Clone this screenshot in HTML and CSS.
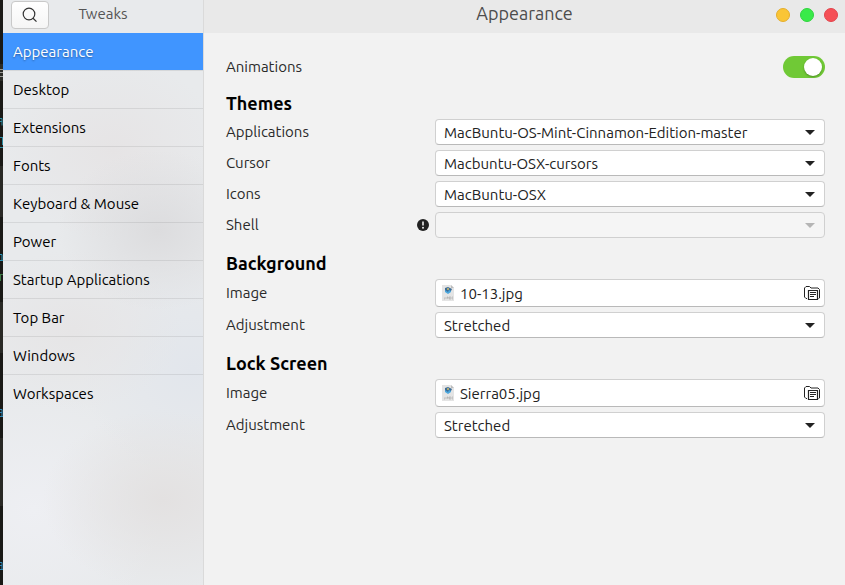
FILE: index.html
```html
<!DOCTYPE html>
<html lang="en">
<head>
  <meta charset="UTF-8" />
  <meta name="viewport" content="width=device-width, initial-scale=1.0"/>
  <title>Tweaks</title>
  <link rel="stylesheet" href="styles.css">
</head>
<body>
  <!-- edge of the editor window behind -->
  <div class="backdrop" aria-hidden="true">
    <svg width="3" height="585">
      <rect width="3" height="585" fill="#191916"/>
      <rect y="64" width="3" height="17" fill="#2c2c28"/>
      <rect y="166" width="3" height="51" fill="#292925"/>
      <rect y="302" width="3" height="51" fill="#292925"/>
      <rect y="438" width="3" height="68" fill="#292925"/>
      <path d="M0 69.500h3M0 72.500h3M0 76.500h3" stroke="#9a9a96"/>
      <path d="M0 118.500h2v7M0 121.500h2M2.500 137v8M0 137.500h2M0 147.500h3" stroke="#2b8aa0" fill="none"/>
      <path d="M0 254.500h2v6M0 260.500h3" stroke="#2b93b5" fill="none"/>
      <path d="M.5 274v7M1 274.500h2" stroke="#3d7a45" fill="none"/>
      <path d="M0 409.500h2v7M0 412.500h2M0 416.500h3M0 562.500h2v7M0 565.500h2M0 569.500h3" stroke="#2f86b5" fill="none"/>
    </svg>
  </div>

  <aside class="sidebar">
    <header class="sidebar-header">
      <button class="search-btn" type="button" aria-label="Search">
        <svg width="16" height="16" viewBox="0 0 16 16" fill="none" stroke="#333" stroke-width="1.200">
          <circle cx="7" cy="7" r="5.800"/>
          <path d="M11 11.300L14.500 14.600"/>
        </svg>
      </button>
      <h1>Tweaks</h1>
    </header>
    <nav class="menu">
      <a href="#appearance" class="active">Appearance</a>
      <a href="#desktop">Desktop</a>
      <a href="#extensions">Extensions</a>
      <a href="#fonts">Fonts</a>
      <a href="#keyboard">Keyboard &amp; Mouse</a>
      <a href="#power">Power</a>
      <a href="#startup">Startup Applications</a>
      <a href="#topbar">Top Bar</a>
      <a href="#windows">Windows</a>
      <a href="#workspaces">Workspaces</a>
    </nav>
  </aside>

  <main class="content">
    <header class="titlebar">
      <h2>Appearance</h2>
      <div class="window-controls">
        <button type="button" class="minimize" aria-label="Minimize"></button>
        <button type="button" class="maximize" aria-label="Maximize"></button>
        <button type="button" class="close" aria-label="Close"></button>
      </div>
    </header>

    <form class="settings" id="appearance">
      <div class="switch-row">
        <label for="animations">Animations</label>
        <input type="checkbox" id="animations" class="switch" checked />
      </div>

      <section>
        <h3>Themes</h3>
        <div class="rows">
          <div class="row">
            <label for="applications">Applications</label>
            <select id="applications"><option>MacBuntu-OS-Mint-Cinnamon-Edition-master</option></select>
          </div>
          <div class="row">
            <label for="cursor">Cursor</label>
            <select id="cursor"><option>Macbuntu-OSX-cursors</option></select>
          </div>
          <div class="row">
            <label for="icons">Icons</label>
            <select id="icons"><option>MacBuntu-OSX</option></select>
          </div>
          <div class="row">
            <label for="shell">Shell
              <svg width="12" height="12" viewBox="0 0 12 12">
                <circle cx="6" cy="6" r="6" fill="#222"/>
                <path d="M6 2.500v4" stroke="#eee" stroke-width="1.600"/>
                <circle cx="6" cy="8.800" r="1" fill="#eee"/>
              </svg>
            </label>
            <select id="shell" disabled><option></option></select>
          </div>
        </div>
      </section>

      <section>
        <h3>Background</h3>
        <div class="rows">
          <div class="row">
            <label for="bgImage">Image</label>
            <button type="button" class="file-btn" id="bgImage">
              <svg class="thumb" width="12" height="16" viewBox="0 0 12 16">
                <path d="M0 0h9l3 3v13H0z" fill="#e4e4e4"/>
                <path d="M9 0v3h3z" fill="#bbb"/>
                <path d="M3 5h6v2L6 9 3 7z" fill="#4aa6dd"/>
                <path d="M3 3l3-1 4 2-1 2-2-1-1 2-3-2z" fill="#3d6c96"/>
                <circle cx="6" cy="4" r="1" fill="#d7bd65"/>
                <path d="M3 12v2H2M5 14v-2h1v1H5M9 12H7v2h2M7 13h2M11 12h-1v2h1" fill="none" stroke="#aaa" stroke-width="0.600"/>
              </svg>
              <span>10-13.jpg</span>
              <svg class="folder" width="16" height="16" viewBox="0 0 16 16" fill="none" stroke="#222">
                <path d="M3 13.500H2L.5 12V3L2 1.500h3.500L7 3h7l1.500 1.500V13l-1 .5"/>
                <path d="M4.500 5.500h9v9h-9z" stroke-width="1.200"/>
                <path d="M6 7.500h6M6 9.500h6M6 11.500h4"/>
              </svg>
            </button>
          </div>
          <div class="row">
            <label for="bgAdjustment">Adjustment</label>
            <select id="bgAdjustment"><option>Stretched</option></select>
          </div>
        </div>
      </section>

      <section>
        <h3>Lock Screen</h3>
        <div class="rows">
          <div class="row">
            <label for="lockImage">Image</label>
            <button type="button" class="file-btn" id="lockImage">
              <svg class="thumb" width="12" height="16" viewBox="0 0 12 16">
                <path d="M0 0h9l3 3v13H0z" fill="#e4e4e4"/>
                <path d="M9 0v3h3z" fill="#bbb"/>
                <path d="M3 5h6v2L6 9 3 7z" fill="#4aa6dd"/>
                <path d="M3 3l3-1 4 2-1 2-2-1-1 2-3-2z" fill="#3d6c96"/>
                <circle cx="6" cy="4" r="1" fill="#d7bd65"/>
                <path d="M3 12v2H2M5 14v-2h1v1H5M9 12H7v2h2M7 13h2M11 12h-1v2h1" fill="none" stroke="#aaa" stroke-width="0.600"/>
              </svg>
              <span>Sierra05.jpg</span>
              <svg class="folder" width="16" height="16" viewBox="0 0 16 16" fill="none" stroke="#222">
                <path d="M3 13.500H2L.5 12V3L2 1.500h3.500L7 3h7l1.500 1.500V13l-1 .5"/>
                <path d="M4.500 5.500h9v9h-9z" stroke-width="1.200"/>
                <path d="M6 7.500h6M6 9.500h6M6 11.500h4"/>
              </svg>
            </button>
          </div>
          <div class="row">
            <label for="lockAdjustment">Adjustment</label>
            <select id="lockAdjustment"><option>Stretched</option></select>
          </div>
        </div>
      </section>
    </form>
  </main>
</body>
</html>
```
FILE: styles.css
```css
* {
  margin: 0;
  padding: 0;
  box-sizing: border-box;
  font-family: Ubuntu, "Noto Sans", sans-serif;
}
body {
  display: grid;
  grid-template-columns: 3px 201px 1fr;
  min-height: 100vh;
  background: #f2f2f2;
  color: #2a2a2a;
  font-size: 15px;
}
.backdrop {
  background: #191916;
  overflow: hidden;
}
.backdrop svg {
  display: block;
}

/* sidebar */
.sidebar {
  border-right: 1px solid #dadada;
  background:
    radial-gradient(ellipse 100px 80px at 155px 230px, #dcdcde, transparent),
    radial-gradient(ellipse 120px 90px at 160px 500px, #e3e1e1, transparent),
    radial-gradient(ellipse 110px 80px at 70px 330px, #e6e5e6, transparent),
    radial-gradient(ellipse 110px 110px at 190px 370px, #e2e6ec, transparent),
    radial-gradient(ellipse 110px 90px at 110px 150px, #e6e4e5, transparent),
    radial-gradient(ellipse 130px 120px at 30px 510px, #eeeff3, transparent),
    #e8eaec;
}
.sidebar-header {
  display: grid;
  grid-template-columns: 38px 1fr 38px;
  height: 33px;
  padding: 1px 8px 4px;
}
.sidebar-header h1 {
  color: #555;
  font-size: 15px;
  font-weight: normal;
  line-height: 26px;
  text-align: center;
}
.search-btn {
  display: flex;
  align-items: center;
  justify-content: center;
  border: 1px solid #c9c9c9;
  border-radius: 4px;
  background: linear-gradient(#fff, #f5f5f5);
}
.menu a {
  display: block;
  height: 38px;
  padding: 0 10px;
  border-bottom: 1px solid rgba(0, 0, 0, 0.08);
  color: #000;
  line-height: 38px;
  text-decoration: none;
}
.menu a:last-child {
  border-bottom: none;
}
.menu a.active {
  background: #4095ff;
  background-clip: padding-box;
  color: white;
  text-shadow: 0 1px 2px rgba(0, 0, 0, 0.4);
}

/* title bar */
.titlebar {
  display: grid;
  grid-template-columns: 1fr auto 1fr;
  height: 33px;
  padding: 0 7px 4px;
  background: #e9e9e9;
}
.titlebar h2 {
  grid-column: 2;
  color: #4c4c4c;
  font-size: 18px;
  font-weight: normal;
  line-height: 27px;
}
.window-controls {
  display: flex;
  align-items: center;
  justify-content: flex-end;
  gap: 10px;
}
.window-controls button {
  width: 14px;
  height: 14px;
  border: 1px solid #e5ae2c;
  border-radius: 50%;
  background: #fac536;
}
.window-controls .maximize {
  border-color: #30d43f;
  background: #39ea49;
}
.window-controls .close {
  border-color: #e3444c;
  background: #f55056;
}

/* settings */
.settings {
  display: flex;
  flex-direction: column;
  gap: 14px;
  padding: 23px 20px 20px 22px;
}
.switch-row {
  display: flex;
  align-items: center;
  justify-content: space-between;
}
.switch {
  appearance: none;
  display: flex;
  align-items: center;
  width: 42px;
  height: 22px;
  padding: 2px 3px;
  border-radius: 11px;
  background: #bbb;
}
.switch:checked {
  justify-content: flex-end;
  background: #70c936;
}
.switch::before {
  content: "";
  width: 18px;
  height: 18px;
  border-radius: 50%;
  background: white;
  box-shadow: 0 1px 2px rgba(0, 0, 0, 0.3);
}
.settings h3 {
  margin-bottom: 4px;
  color: #000;
  font-size: 18px;
  line-height: 23px;
}
.rows {
  display: grid;
  gap: 5px;
}
.row {
  display: grid;
  grid-template-columns: 209px 1fr;
  align-items: center;
}
.row label {
  display: flex;
  align-items: center;
  justify-content: space-between;
  padding-right: 6px;
}
label {
  line-height: 20px;
}
select,
.file-btn {
  width: 100%;
  height: 26px;
  border: 1px solid #d0d0d0;
  border-bottom-color: #b9b9b9;
  border-radius: 4px;
  background: white;
  color: #222;
  font-size: 15px;
}
select {
  appearance: none;
  padding: 0 30px 0 8px;
  background: white url("data:image/svg+xml,%3Csvg xmlns='http://www.w3.org/2000/svg' width='10' height='5'%3E%3Cpath d='M0 0h10L5 5z' fill='%23222'/%3E%3C/svg%3E") no-repeat right 9px center;
}
select:disabled {
  border-color: #d0d0d0;
  background: #f5f5f5 url("data:image/svg+xml,%3Csvg xmlns='http://www.w3.org/2000/svg' width='10' height='5'%3E%3Cpath d='M0 0h10L5 5z' fill='%23b5b5b5'/%3E%3C/svg%3E") no-repeat right 9px center;
  opacity: 1;
}
.file-btn {
  display: flex;
  align-items: center;
  gap: 6px;
  height: 28px;
  padding: 0 4px 0 6px;
}
.file-btn .folder {
  margin-left: auto;
}
```
